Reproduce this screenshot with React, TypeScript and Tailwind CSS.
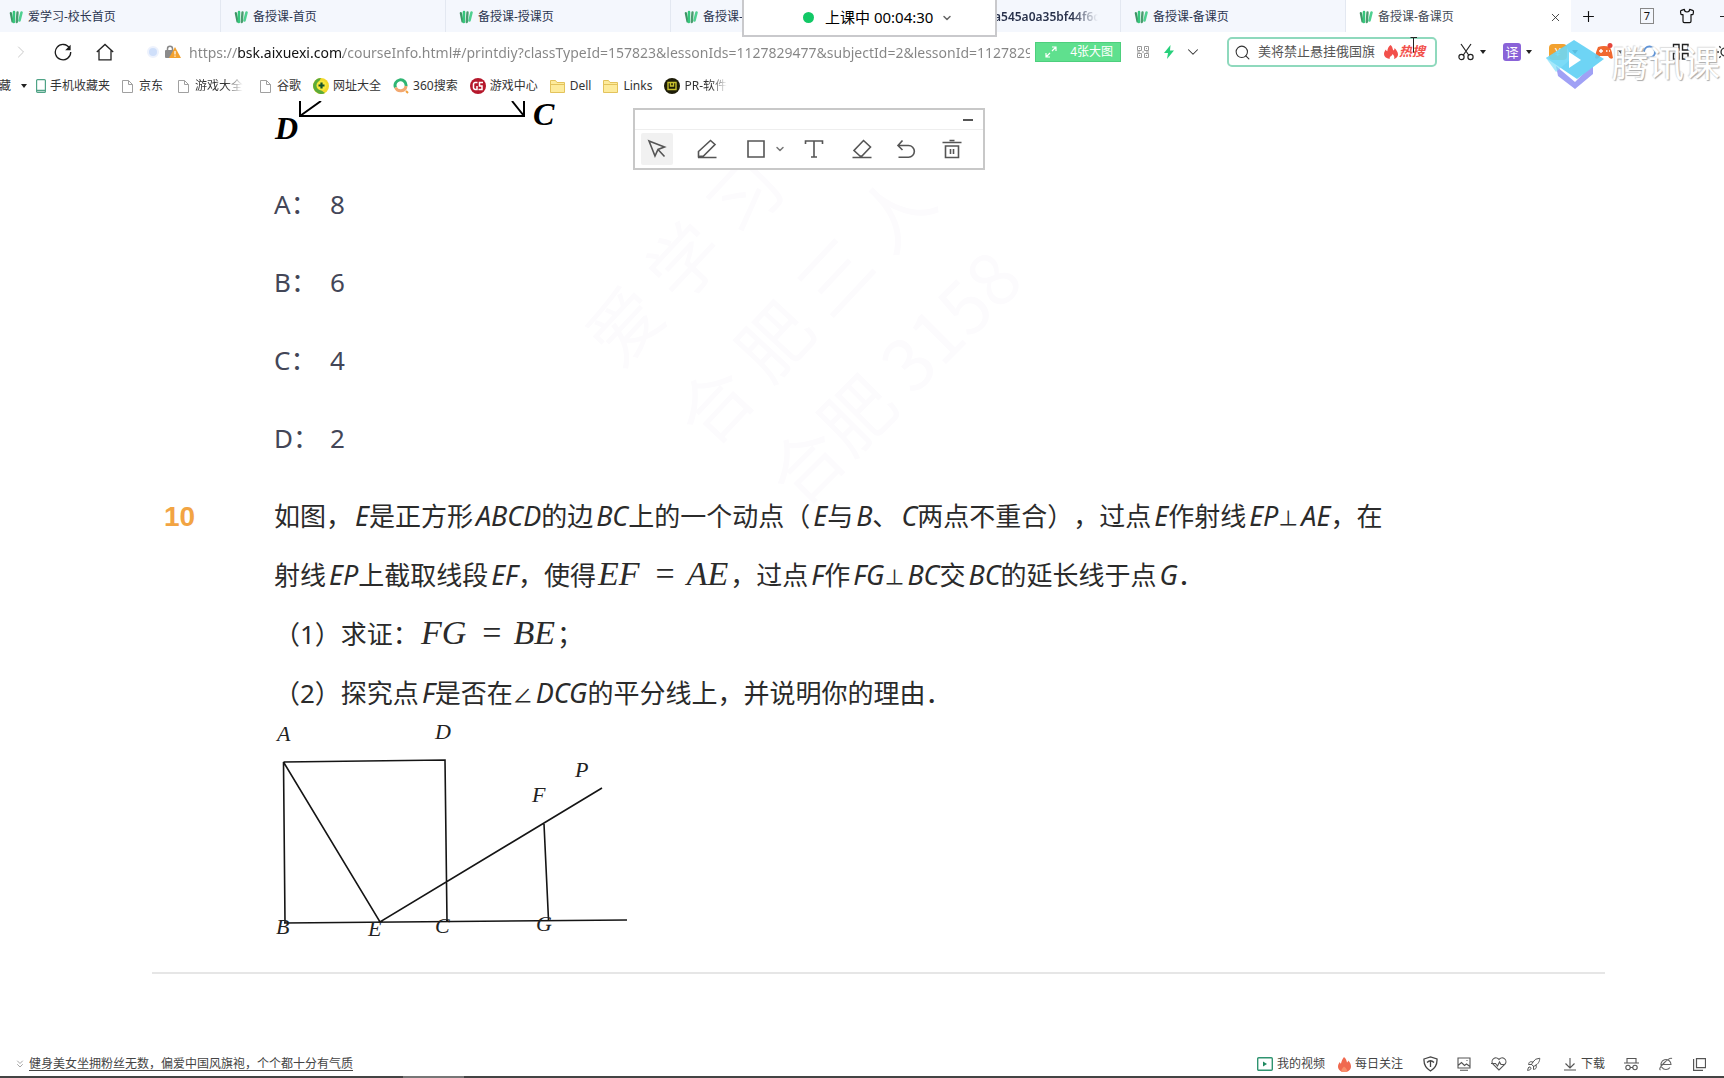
import React from "react";
import {
  ChevronDown,
  ChevronRight,
  ChevronsDown,
  Plus,
  Rocket,
  Search,
  Shirt,
  X,
} from "lucide-react";

const ui = "font-['Noto_Sans','Noto_Sans_CJK_SC',sans-serif]";

function TabLogo() {
  return (
    <svg className="h-3.5 w-3.5 shrink-0" viewBox="0 0 14 14" fill="none" strokeLinecap="round">
      <path d="M1.800 3 3.500 11.500" stroke="#3f9465" strokeWidth="2.200" />
      <path d="M5 2 4.800 12" stroke="#35c77c" strokeWidth="2.600" />
      <path d="M8.500 2.500 7.800 12" stroke="#4a9c6e" strokeWidth="2.400" />
      <path d="M12.500 2.500 10.500 10.500" stroke="#4fd191" strokeWidth="2.600" />
    </svg>
  );
}

function Caret() {
  return (
    <svg className="h-1.5 w-1.5 shrink-0" viewBox="0 0 6 6">
      <path d="M0 1h6L3 5z" fill="#222" />
    </svg>
  );
}

const tabs = [
  { title: "爱学习-校长首页" },
  { title: "备授课-首页" },
  { title: "备授课-授课页" },
  { title: "备授课-授课页" },
  { title: "a545a0a35bf44f6c", plain: true },
  { title: "备授课-备课页" },
  { title: "备授课-备课页", active: true },
];

function TabBar() {
  return (
    <div className="flex h-8 items-stretch overflow-hidden bg-[#f4f7fd]">
      <div role="tablist" className="-ml-1 flex min-w-0 flex-1">
        {tabs.map((t, i) => (
          <div
            key={i}
            role="tab"
            aria-selected={!!t.active}
            className={
              "flex min-w-0 flex-1 items-center gap-[5px] overflow-hidden border-r pt-0.5 pl-[13px] pr-2 text-[12px] whitespace-nowrap " +
              (t.active ? "border-transparent bg-white text-[#444b57]" : "border-[#e3e8f1] text-[#2b3550]")
            }
          >
            {t.plain ? (
              <span className="ml-[85px] w-[104px] shrink-0 bg-linear-to-r from-[#27304a] from-75% to-transparent bg-clip-text font-semibold text-transparent">
                {t.title}
              </span>
            ) : (
              <>
                <TabLogo />
                <span className="flex-1">{t.title}</span>
              </>
            )}
            {t.active && (
              <button aria-label="关闭标签页">
                <X size={13} strokeWidth={1.5} color="#222" />
              </button>
            )}
          </div>
        ))}
      </div>
      <div className="flex w-[153px] shrink-0 items-center pl-[9px] text-[#111]">
        <button aria-label="新标签页">
          <Plus size={17} strokeWidth={1.6} />
        </button>
        <button className="ml-[43px] h-4 w-3.5 border border-[#888] text-center text-[11px] leading-[14px]">7</button>
        <button aria-label="皮肤" className="ml-[25px]">
          <Shirt size={16} strokeWidth={1.8} />
        </button>
        <span className="ml-auto h-px w-1 bg-[#222]" />
      </div>
    </div>
  );
}

function AddressBar() {
  return (
    <div className="flex h-10 items-center">
      <button aria-label="前进" className="flex w-[42px] shrink-0 justify-center">
        <ChevronRight size={20} strokeWidth={1.2} color="#c9c9c9" />
      </button>
      <button aria-label="刷新" className="flex w-[42px] shrink-0 justify-center">
        <svg className="h-[18px] w-[18px]" viewBox="0 0 18 18" fill="none" stroke="#1c1c1c" strokeWidth="1.3">
          <path d="M15.6 5.2A7.7 7.7 0 1 0 16.7 9" />
          <path d="M16.6 1.8v5.4h-5.4z" fill="#1c1c1c" stroke="none" />
        </svg>
      </button>
      <button aria-label="主页" className="flex w-[42px] shrink-0 justify-center">
        <svg className="h-[18px] w-[18px]" viewBox="0 0 18 18" fill="none" stroke="#222" strokeWidth="1.3">
          <path d="M.8 9 9 1.4 17.200 9M3 7.400V16.800H15V7.400" />
        </svg>
      </button>
      <span className="ml-[21px] h-3 w-3 shrink-0 rounded-full border-2 border-[#edf2fd] bg-[#cfdffa]" />
      <svg className="ml-1.5 h-3.5 w-4 shrink-0" viewBox="0 0 16 14">
        <path d="M2.500 6V3.800a2.500 2.500 0 0 1 5 0V6" fill="none" stroke="#888" strokeWidth="1.500" />
        <rect x="0" y="5" width="10" height="8" rx="1" fill="#8b8b8b" />
        <path d="M10 2 16 13H4z" fill="#f2a12f" />
        <path d="M10 6v3.500M10 10.500v1.300" stroke="#fff" strokeWidth="1.200" />
      </svg>
      <input
        aria-label="网址"
        readOnly
        className="ml-2 min-w-0 flex-1 bg-[linear-gradient(90deg,#858585_49px,#111_49px,#111_154px,#858585_154px)] bg-clip-text text-[14px] text-transparent outline-none"
        value="https://bsk.aixuexi.com/courseInfo.html#/printdiy?classTypeId=157823&lessonIds=1127829477&subjectId=2&lessonId=1127829477"
      />
      <button className="ml-[5px] flex h-5 w-[86px] shrink-0 items-center justify-between bg-[#5fe08e] pr-2 pl-2.5 text-[12px] text-white outline outline-1 -outline-offset-1 outline-[#4dcf7d]">
        <svg className="h-3 w-3" viewBox="0 0 12 12" fill="none" stroke="#fff" strokeWidth="1.200">
          <path d="M7 1h4v4M11 1 7 5M5 11H1V7M1 11l4-4" />
        </svg>
        4张大图
      </button>
      <button aria-label="二维码" className="ml-[9px] flex w-[26px] shrink-0 justify-center">
        <svg className="h-3 w-3" viewBox="0 0 12 12" fill="none" stroke="#999">
          <path d="M.5.500h4v4h-4zM7.500.500h4v4h-4zM.5 7.500h4v4h-4zM7.500 7.500h4v4h-4zM2 2.500h1M9 2.500h1M2 9.500h1M9 9.500h1M0 6h3M5 6h2M9 6h3" />
        </svg>
      </button>
      <button aria-label="加速" className="flex w-[26px] shrink-0 justify-center">
        <svg className="h-3.5 w-2.5" viewBox="0 0 10 14">
          <path d="M6.500 0 0 8h4l-1 6 7-8.500H6z" fill="#27d07b" />
        </svg>
      </button>
      <button aria-label="展开" className="flex w-[22px] shrink-0 justify-center">
        <ChevronDown size={18} strokeWidth={1.4} color="#333" />
      </button>
      <label className="ml-[23px] flex h-[30px] w-[210px] shrink-0 items-center rounded-[5px] border-2 border-[#8fd9bd] pl-[5px]">
        <Search size={17} strokeWidth={1.5} color="#333" />
        <input
          aria-label="搜索"
          readOnly
          value="美将禁止悬挂俄国旗"
          className="ml-[7px] w-[122px] bg-transparent text-[13px] text-[#555] outline-none"
        />
        <Flame className="ml-1 h-3.5 w-3.5 shrink-0" color="#f2504b" />
        <span className="ml-px text-[13px] font-bold text-[#f2504b] italic">热搜</span>
      </label>
      <div className="ml-5 flex shrink-0 items-center">
        <button aria-label="截图" className="flex w-[46px] items-center gap-[5px]">
          <svg className="h-[18px] w-[18px]" viewBox="0 0 18 18" fill="none" stroke="#222" strokeWidth="1.200">
            <path d="M4 1l8 11.500M14 1 6 12.500" />
            <circle cx="4.500" cy="14" r="2.600" />
            <circle cx="13.500" cy="14" r="2.600" />
          </svg>
          <Caret />
        </button>
        <button className="flex w-[46px] items-center gap-[5px]">
          <span className="h-[18px] w-[18px] rounded-[3px] bg-[#8a63d8] text-center text-[13px] leading-[18px] text-white">译</span>
          <Caret />
        </button>
        <button className="flex w-[46px] items-center gap-[5px]">
          <span className="h-4 w-[18px] rounded-[4px] bg-[#f2a12f] text-center text-[11px] leading-4 text-white">¥</span>
          <Caret />
        </button>
        <button aria-label="游戏" className="flex w-[46px] items-center gap-[5px]">
          <svg className="h-[18px] w-[18px]" viewBox="0 0 18 18">
            <path d="M3 4q6-2 12 0 2 4 3 11-3 2-5-2H5q-2 4-5 2Q1 8 3 4z" fill="#f0682f" />
            <circle cx="15" cy="2.500" r="2.500" fill="#e5453c" />
            <path d="M4 8h4M6 6v4M11 8h1.500M14 8h1" stroke="#fff" strokeWidth="1.400" />
          </svg>
          <Caret />
        </button>
        <button aria-label="浏览医生" className="w-[31px]">
          <svg className="h-4 w-4" viewBox="0 0 16 16" fill="none" strokeWidth="2">
            <path d="M3 8A5.500 5.500 0 1 1 9 13.500" stroke="#5f93d6" />
            <path d="M0 13.500h9" stroke="#a5b8cf" />
          </svg>
        </button>
        <button aria-label="应用" className="w-[45px]">
          <svg className="h-[18px] w-[18px]" viewBox="0 0 18 18" fill="none" stroke="#222" strokeWidth="1.400">
            <path d="M1.500 1.500h5.500v5.500H1.500zM10.500 1.500h5.500v5.500h-5.500zM1.500 10.500h5.500v5.500H1.500zM10.500 10.500h5.500v5.500h-5.500z" />
          </svg>
        </button>
        <button aria-label="设置" className="w-[7px] overflow-hidden">
          <svg className="h-4 w-4 max-w-none" viewBox="0 0 16 16" fill="none" stroke="#333" strokeWidth="1.300">
            <circle cx="8" cy="8" r="4" />
            <path d="M8 0v2M8 14v2M0 8h2M2.300 2.300l1.400 1.400M2.300 13.700l1.400-1.400" />
          </svg>
        </button>
      </div>
    </div>
  );
}

function Flame({ className, color }: { className: string; color: string }) {
  return (
    <svg className={className} viewBox="0 0 14 14">
      <path
        d="M6.500 0C9 2 8.500 4.500 9.500 5.500 10.300 5 10.500 4 10.500 3c2 2 3.500 4.300 3.500 6.500 0 2-1.500 4-4 4.500.8-1.800.3-3.500-1.500-5-.3 1.500-1.500 2-2.500 3-.5.700-.5 1.300-.3 2C2 13.500 0 11.500 0 9c0-2 1-3.500 2-4.500.2 1 .6 1.500 1.300 1.800C3.500 4 4.500 1.500 6.500 0z"
        fill={color}
      />
    </svg>
  );
}

function SolidFlame() {
  return (
    <svg className="h-[15px] w-[13px]" viewBox="0 0 13 15">
      <path
        d="M6 0c2.500 2 2.500 4 3 5.500C10 5 10 4 10 3.500c2 1.500 3 4 3 6C13 13 10 15 6.500 15S0 13 0 9.500C0 7.500 1 6 2 5c0 1 .5 1.500 1 1.500C3.500 4 4.500 2 6 0z"
        fill="#f0694f"
      />
      <path d="M3.500 15C3 12 5 11 6 9.500 7.500 11 9.500 12 9 15z" fill="#f78d6a" />
    </svg>
  );
}

function PageIcon() {
  return (
    <svg className="h-[13px] w-[11px] shrink-0" viewBox="0 0 11 13" fill="none" stroke="#a0a0a0">
      <path d="M.5.500h6l4 4v8H.5zM6.500.500v4h4" />
    </svg>
  );
}
function FolderIcon() {
  return (
    <svg className="h-[13px] w-[15px]" viewBox="0 0 15 13">
      <path d="M.5 12.500V.5h5l1.500 2h7.500v10z" fill="#fdeb9c" stroke="#e3c35c" />
      <path d="M1 4.500h13" stroke="#e3c35c" />
    </svg>
  );
}

function Bookmark({
  icon,
  label,
  className = "",
  fade = false,
}: {
  icon: React.ReactNode;
  label: string;
  className?: string;
  fade?: boolean;
}) {
  return (
    <a href="#" className={"flex shrink-0 items-center " + className}>
      {icon}
      <span className={fade ? "bg-linear-to-r from-[#333] from-65% to-transparent bg-clip-text text-transparent" : ""}>
        {label}
      </span>
    </a>
  );
}

function Bookmarks() {
  return (
    <nav className="flex h-7 items-center overflow-hidden text-[12px] whitespace-nowrap text-[#333]">
      <button className="-ml-px mr-3 flex shrink-0 items-center gap-2.5">
        藏
        <Caret />
      </button>
      <Bookmark
        className="-ml-[3px] mr-3 gap-1"
        label="手机收藏夹"
        icon={
          <svg className="h-3.5 w-2.5" viewBox="0 0 10 14" fill="none">
            <rect x=".6" y=".6" width="8.800" height="12.800" rx="1" stroke="#4fa386" strokeWidth="1.200" />
            <path d="M1 11.500h8" stroke="#4fa386" strokeWidth="1.500" />
          </svg>
        }
      />
      <Bookmark className="mr-[15px] gap-1.5" label="京东" icon={<PageIcon />} />
      <Bookmark className="mr-[17px] gap-1.5" label="游戏大全" icon={<PageIcon />} fade />
      <Bookmark className="mr-3 gap-1.5" label="谷歌" icon={<PageIcon />} />
      <Bookmark
        className="mr-3 gap-1"
        label="网址大全"
        icon={
          <svg className="h-4 w-4" viewBox="0 0 16 16">
            <circle cx="8" cy="8" r="8" fill="#f3d92a" />
            <path d="M8 0a8 8 0 1 0 4 15A10 10 0 0 1 8 0z" fill="#5cab3a" />
            <circle cx="8.500" cy="7.500" r="5" fill="#f8e83c" />
            <path d="M8.500 4.500v6M5.500 7.500h6" stroke="#14522b" strokeWidth="2.200" />
          </svg>
        }
      />
      <Bookmark
        className="mr-3 gap-1"
        label="360搜索"
        icon={
          <svg className="h-4 w-4" viewBox="0 0 16 16" fill="none" strokeWidth="3">
            <path d="M2.500 9.500A5.500 5.500 0 1 1 13 8" stroke="#2fb573" />
            <path d="M13 8A5.500 5.500 0 0 1 2.500 9.500" stroke="#f2a870" />
            <path d="M13 13l2 2" stroke="#f2a03a" strokeWidth="2" />
          </svg>
        }
      />
      <Bookmark
        className="mr-3 gap-1"
        label="游戏中心"
        icon={
          <svg className="h-4 w-4" viewBox="0 0 16 16" fill="none">
            <circle cx="8" cy="8" r="8" fill="#b5172b" />
            <path d="M7.500 4.500H5A2 2 0 0 0 3.500 6v4A2 2 0 0 0 5 11.500h2V8M13 4.500H9.500V8H12v3.500H8.500" stroke="#fff" strokeWidth="1.500" />
          </svg>
        }
      />
      <Bookmark className="mr-3 gap-[5px]" label="Dell" icon={<FolderIcon />} />
      <Bookmark className="mr-3 gap-[5px]" label="Links" icon={<FolderIcon />} />
      <Bookmark
        className="gap-1"
        label="PR-软件"
        fade
        icon={
          <svg className="h-4 w-4 shrink-0" viewBox="0 0 16 16" fill="none">
            <circle cx="8" cy="8" r="8" fill="#1d1c08" />
            <path d="M4 4.500h8v7H4zM6.500 4v4h3V4" stroke="#c9c12e" strokeWidth="1.400" />
          </svg>
        }
      />
    </nav>
  );
}

function TopFigure() {
  return (
    <svg className="block h-12 w-[300px]" viewBox="0 0 300 48" fill="none" stroke="#000" strokeWidth="2">
      <path d="M26 0V15H250V0M26 15 47 0M238 0 250 15" />
      <g stroke="none" fill="#000" className="font-['Liberation_Serif',serif] text-[32px] font-bold italic">
        <text x="1" y="38">D</text>
        <text x="259" y="24">C</text>
      </g>
    </svg>
  );
}

function SquareFigure() {
  return (
    <svg className="mt-px block h-[220px] w-[380px]" viewBox="0 0 380 220" fill="none" stroke="#151515" strokeWidth="1.600">
      <path d="M9.500 38 171 36 173 197M9.500 38 11 199M9.500 38 106 198 328 64M270 100 274.500 196M10 199 353 196" />
      <g stroke="none" fill="#222" className="font-['Liberation_Serif',serif] text-[22px] italic">
        <text x="3" y="17">A</text>
        <text x="161" y="15">D</text>
        <text x="301" y="53">P</text>
        <text x="258" y="78">F</text>
        <text x="2" y="210">B</text>
        <text x="94" y="212">E</text>
        <text x="161" y="209">C</text>
        <text x="262" y="207">G</text>
      </g>
    </svg>
  );
}

function Formula({ left, right }: { left: string; right: string }) {
  return (
    <span className="mx-0.5 font-['Liberation_Serif',serif] text-[34px] leading-none">
      <em>{left}</em>
      <span className="mr-3 ml-4">=</span>
      <em>{right}</em>
    </span>
  );
}

function Sym({ children }: { children: string }) {
  return <span className="text-[20px] leading-none">{children}</span>;
}

const options = [
  ["A", "8"],
  ["B", "6"],
  ["C", "4"],
  ["D", "2"],
];

function Watermark() {
  return (
    <svg
      aria-hidden="true"
      className="pointer-events-none absolute top-0 left-[560px] h-[420px] w-[560px]"
      viewBox="0 0 560 420"
    >
      <g fill="#fcfbfd" className="font-['Noto_Sans_CJK_SC',sans-serif] text-[72px]">
        <text transform="translate(60 270) rotate(-47)">爱 学 习</text>
        <text transform="translate(150 350) rotate(-47)">合 肥 三 人</text>
        <text transform="translate(240 410) rotate(-45)">合肥 3158</text>
      </g>
    </svg>
  );
}

function Question() {
  return (
    <main className="relative flex-1 overflow-hidden pt-px">
      <Watermark />
      <div className="relative mr-[119px] ml-[152px] border-b-2 border-[#e6e6e6] pb-7">
        <div className="pl-[122px]">
          <TopFigure />
          <ul className="mt-4 text-[26px] text-[#434657]">
            {options.map(([k, v]) => (
              <li key={k} className="flex h-[78px] items-center">
                <span className="w-14">{k}：</span>
                <span>{v}</span>
              </li>
            ))}
          </ul>
        </div>
        <section className="mt-2.5 flex">
          <div className="w-[122px] shrink-0 pl-3 font-['Liberation_Sans',sans-serif] text-[28px] leading-[59px] font-bold text-[#f2a443]">
            10
          </div>
          <div>
            <div className="text-[26px] leading-[59px] whitespace-nowrap text-[#2b2b2b] [text-spacing-trim:space-all] [&_i]:ml-[3px] [&_i]:text-[27px] [&_i]:leading-none">
              <p className="h-[59px]">
                如图，<i>E</i>是正方形<i>ABCD</i>的边<i>BC</i>上的一个动点（<i>E</i>与<i>B</i>、<i>C</i>两点不重合），过点<i>E</i>作射线<i>EP</i>
                <Sym>⊥</Sym>
                <i>AE</i>，在
              </p>
              <p className="h-[59px]">
                射线<i>EP</i>上截取线段<i>EF</i>，使得
                <Formula left="EF" right="AE" />
                ，过点<i>F</i>作<i>FG</i>
                <Sym>⊥</Sym>
                <i>BC</i>交<i>BC</i>的延长线于点<i>G</i>．
              </p>
              <p className="h-[59px]">
                （1）求证：
                <Formula left="FG" right="BE" />；
              </p>
              <p className="h-[59px]">
                （2）探究点<i>F</i>是否在<Sym>∠</Sym>
                <i>DCG</i>的平分线上，并说明你的理由．
              </p>
            </div>
            <SquareFigure />
          </div>
        </section>
      </div>
    </main>
  );
}

function ClassStatus() {
  return (
    <div className="absolute top-0 left-[742px] flex h-[37px] w-[255px] items-center border-2 border-t-0 border-[#c9c9cc] bg-white pl-[59px] text-[15px] whitespace-nowrap text-black">
      <span className="mr-[11px] h-[11px] w-[11px] shrink-0 rounded-full bg-[#12c866]" />
      <span>上课中 00:04:30</span>
      <button aria-label="更多" className="ml-2">
        <ChevronDown size={12} strokeWidth={3} color="#666" />
      </button>
    </div>
  );
}

function DrawToolbar() {
  return (
    <div className="absolute top-[108px] left-[633px] h-[62px] w-[352px] border-2 border-[#c8c8c8] bg-white">
      <div className="flex h-5 items-center justify-end border-b border-[#eee] pr-2.5">
        <button aria-label="最小化" className="h-0.5 w-2.5 bg-[#555]" />
      </div>
      <div className="flex h-[38px] items-center pl-1.5 [&_svg]:h-5 [&_svg]:w-5">
        <button aria-label="选择" className="flex h-8 w-8 items-center justify-center rounded-xs bg-[#f1f1f1]">
          <svg viewBox="0 0 20 20" fill="none" stroke="#555" strokeWidth="1.600">
            <path d="M2 2 17.500 8 11 10.500 8 17zM11 10.500 17.500 17.500" />
          </svg>
        </button>
        <button aria-label="画笔" className="ml-6">
          <svg viewBox="0 0 20 20" fill="none" stroke="#555" strokeWidth="1.600">
            <path d="M1.500 17.500v-5L13.500 1.500 18 5.500 6.500 17zM1 18.500h18.500" />
          </svg>
        </button>
        <button aria-label="矩形" className="ml-[29px]">
          <svg viewBox="0 0 20 20" fill="none" stroke="#555" strokeWidth="1.600">
            <path d="M2 2h16v16H2z" />
          </svg>
        </button>
        <button aria-label="更多形状" className="ml-2 [&_svg]:h-3! [&_svg]:w-3!">
          <ChevronDown strokeWidth={3} color="#777" />
        </button>
        <button aria-label="文字" className="ml-[18px]">
          <svg viewBox="0 0 20 20" fill="none" stroke="#555" strokeWidth="1.600">
            <path d="M1.500 5V2H18.500V5M10 2V18M7 18h6" />
          </svg>
        </button>
        <button aria-label="橡皮" className="ml-7">
          <svg viewBox="0 0 20 20" fill="none" stroke="#555" strokeWidth="1.600">
            <path d="M11.500 1.500 18.500 8 10 17H8L2 11.500zM.5 18.500h19" />
          </svg>
        </button>
        <button aria-label="撤销" className="ml-6">
          <svg viewBox="0 0 20 20" fill="none" stroke="#555" strokeWidth="1.600">
            <path d="M6.500 1.500 2 6.500 6.500 11M2 6.500H12.500A5.700 5.700 0 0 1 12.500 18.200H2.500" />
          </svg>
        </button>
        <button aria-label="清空" className="ml-[26px]">
          <svg viewBox="0 0 20 20" fill="none" stroke="#555" strokeWidth="1.600">
            <path d="M.5 3.500h19M7.500 1.500h5M3.500 7v11.500h13V7zM8.500 10v5M11.500 10v5" />
          </svg>
        </button>
      </div>
    </div>
  );
}

function TencentMark() {
  return (
    <div className="pointer-events-none absolute top-[38px] right-0 flex w-[178px] items-center overflow-hidden whitespace-nowrap">
      <svg className="h-[52px] w-[58px] shrink-0" viewBox="0 0 58 52" opacity=".9">
        <path d="M10 28 29 44 47 26V36L29 51 12 38z" fill="#9697f5" />
        <path d="M28 2 58 21 31 41 0 20z" fill="#5fd0f5" />
        <path d="M0 20l10 14 16-14-6-12z" fill="#74dcf8" opacity=".7" />
        <path d="M23 14v16l12-8z" fill="#fff" />
      </svg>
      <span className="ml-2 text-[36px] leading-none text-white [text-shadow:1px_1px_1px_#aaa,-1px_-1px_1px_#ddd]">
        腾讯课
      </span>
    </div>
  );
}

function StatusBar() {
  return (
    <footer className="text-[12px] text-[#444]">
      <div className="flex h-6 items-center pr-[18px] pl-3.5 whitespace-nowrap [&_svg]:shrink-0">
        <ChevronsDown size={12} strokeWidth={1.5} color="#888" />
        <a href="#" className="ml-[3px] underline underline-offset-2">
          健身美女坐拥粉丝无数，偏爱中国风旗袍，个个都十分有气质
        </a>
        <a href="#" className="ml-auto flex items-center gap-1">
          <svg className="h-3.5 w-4" viewBox="0 0 16 14" fill="none">
            <rect x=".7" y=".7" width="14.600" height="12.600" rx="1" stroke="#2f9470" strokeWidth="1.400" />
            <path d="M6 4.500v5l4-2.500z" fill="#1f8a60" />
          </svg>
          我的视频
        </a>
        <a href="#" className="ml-[13px] flex items-center gap-1">
          <SolidFlame />
          每日关注
        </a>
        <button aria-label="安全" className="ml-5">
          <svg className="h-4 w-[15px]" viewBox="0 0 15 16" fill="none" stroke="#444" strokeWidth="1.300">
            <path d="M1 3 7.500 1 14 3Q14.500 11 7.500 15 .5 11 1 3zM4 6.500Q7.500 3 11 6.500M7.500 5v6" />
          </svg>
        </button>
        <button aria-label="图片" className="ml-[19px]">
          <svg className="h-3.5 w-3.5" viewBox="0 0 14 14" fill="none" stroke="#555" strokeWidth="1.100">
            <path d="M1 1h12v10H1zM1 8.500 4.500 5.500 7.500 8.500 9.500 7 13 9.500M3 13.300h8M9.500 3.500h1" />
          </svg>
        </button>
        <button aria-label="医生" className="ml-5">
          <svg className="h-3.5 w-4" viewBox="0 0 16 14" fill="none" stroke="#555" strokeWidth="1.100">
            <path d="M8 13 1.800 7A3.700 3.700 0 0 1 8 2.500 3.700 3.700 0 0 1 14.200 7zM0 6.500h4.500L6.500 9l2-4 1.500 2.500h3" />
          </svg>
        </button>
        <button aria-label="加速" className="ml-[19px]">
          <Rocket size={15} strokeWidth={1.6} color="#555" />
        </button>
        <button className="ml-[22px] flex items-center gap-1">
          <svg className="h-3.5 w-3.5" viewBox="0 0 14 14" fill="none" stroke="#555" strokeWidth="1.100">
            <path d="M7 1v9.500M2.500 6.500 7 11l4.500-4.500M1 13h12" />
          </svg>
          下载
        </button>
        <button aria-label="无痕" className="ml-[19px]">
          <svg className="h-3.5 w-[15px]" viewBox="0 0 15 14" fill="none" stroke="#555" strokeWidth="1.100">
            <path d="M3 5.500V1.500h9v4M0 6h15M6 10.500h3" />
            <circle cx="4" cy="10.500" r="2.200" />
            <circle cx="11" cy="10.500" r="2.200" />
          </svg>
        </button>
        <button aria-label="内核" className="ml-5">
          <svg className="h-3.5 w-3.5" viewBox="0 0 14 14" fill="none" stroke="#666" strokeWidth="1.100">
            <path d="M2.500 7.500h9.500A5 5 0 1 0 11 10.500M1.500 13Q-1 12 5 6T13 1.500" />
          </svg>
        </button>
        <button aria-label="窗口" className="ml-5">
          <svg className="h-[13px] w-[13px]" viewBox="0 0 13 13" fill="none" stroke="#555" strokeWidth="1.200">
            <path d="M3.500.6h9v9h-9zM.6 1v11.400H10" />
          </svg>
        </button>
      </div>
      <div className="h-0.5 bg-[#444] pl-[403px]">
        <div className="h-full w-[61px] bg-[#777]" />
      </div>
    </footer>
  );
}

export default function App() {
  return (
    <div className={"relative flex min-h-screen flex-col overflow-hidden bg-white " + ui}>
      <header>
        <TabBar />
        <AddressBar />
        <Bookmarks />
      </header>
      <Question />
      <StatusBar />
      <ClassStatus />
      <DrawToolbar />
      <TencentMark />
      <svg className="pointer-events-none absolute top-[37px] left-[1410px] h-4 w-2" viewBox="0 0 8 16" fill="none" stroke="#222">
        <path d="M.5.500H3.500V15.500M3.500.500H7" />
      </svg>
    </div>
  );
}
